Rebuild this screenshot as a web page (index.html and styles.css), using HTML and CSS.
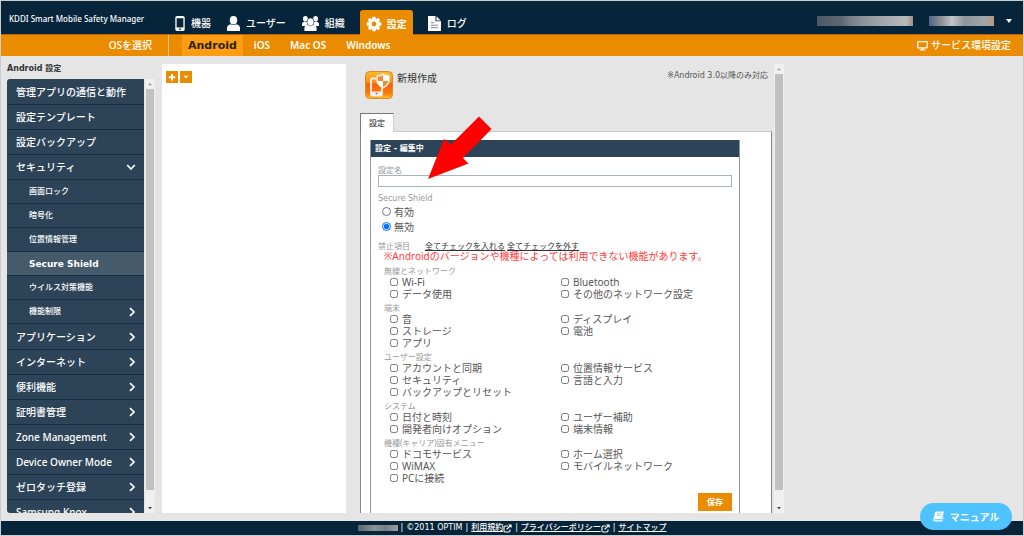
FILE: index.html
```html
<!DOCTYPE html>
<html lang="ja">
<head>
<meta charset="utf-8">
<title>KDDI Smart Mobile Safety Manager</title>
<link rel="stylesheet" href="styles.css">
</head>
<body>
<svg class="defs" aria-hidden="true">
  <symbol id="chev-r" viewBox="0 0 8 10"><path d="M2 1.2 6 5 2 8.8" fill="none" stroke="#fff" stroke-width="1.7"/></symbol>
  <symbol id="chev-d" viewBox="0 0 10 8"><path d="M1.2 2 5 6 8.8 2" fill="none" stroke="#fff" stroke-width="1.7"/></symbol>
  <symbol id="ext" viewBox="0 0 9 9"><path d="M5 2H2.2Q1 2 1 3.2V6.8Q1 8 2.2 8H5.8Q7 8 7 6.8V5.5" fill="none" stroke="#fff" stroke-width="1.1"/><path d="M3.6 5.4 7.4 1.6" stroke="#fff" stroke-width="1.3"/><path d="M5 .4H8.6V4z" fill="#fff"/></symbol>
</svg>
<div class="page">
  <header class="top">
    <div class="brand">KDDI Smart Mobile Safety Manager</div>
    <nav class="main-nav">
      <a href="#"><svg class="ico-phone" viewBox="0 0 10 16"><rect width="10" height="16" rx="1.8" fill="#fff"/><rect x="1.4" y="2.4" width="7.2" height="9.8" fill="#06253a"/><circle cx="5" cy="14" r="1" fill="#06253a"/></svg>機器</a>
      <a href="#"><svg class="ico-user" viewBox="0 0 13 15"><ellipse cx="6.5" cy="4.2" rx="3.7" ry="4.2" fill="#fff"/><path d="M0 15V12Q0 9 4 8.2Q6.5 10 9 8.2Q13 9 13 12V15z" fill="#fff"/></svg>ユーザー</a>
      <a href="#"><svg class="ico-group" viewBox="0 0 17 15"><g fill="#fff"><ellipse cx="3.4" cy="2.8" rx="2.4" ry="2.7"/><ellipse cx="13.6" cy="2.8" rx="2.4" ry="2.7"/><path d="M0 10V8Q0 6.2 2.4 5.6L5.5 6 5.5 10zM17 10V8Q17 6.2 14.600 5.600L11.500 6 11.500 10z"/></g><g fill="#fff"><path d="M2.400 15V12Q2.400 9.600 5.800 9H11.200Q14.600 9.600 14.600 12V15z"/><ellipse cx="8.500" cy="6" rx="3.400" ry="4" stroke="#06253a" stroke-width=".5"/></g></svg>組織</a>
      <a href="#" class="on"><svg class="ico-gear" viewBox="-8 -8 16 16"><g fill="#fff"><circle r="5.6"/><rect x="-1.7" y="-7.3" width="3.4" height="14.6" rx=".5"/><rect x="-1.7" y="-7.3" width="3.4" height="14.6" rx=".5" transform="rotate(45)"/><rect x="-1.7" y="-7.3" width="3.4" height="14.6" rx=".5" transform="rotate(90)"/><rect x="-1.7" y="-7.3" width="3.4" height="14.6" rx=".5" transform="rotate(135)"/></g><circle r="2.4" fill="#eb8c00"/></svg>設定</a>
      <a href="#"><svg class="ico-doc" viewBox="0 0 13 15"><path d="M0 0H7.5V5.3H13V15H0z" fill="#fff"/><path d="M8.5.3 12.7 4.4H8.5z" fill="#fff"/><path d="M3 6.7H6M3 9.2H10M3 11.7H10" stroke="#7d8a94" stroke-width="1"/></svg>ログ</a>
    </nav>
    <div class="account"><span class="mask mask-a"></span><span class="mask mask-b"></span><svg class="caret" viewBox="0 0 6 4"><path d="M0 0H6L3 4z" fill="#fff"/></svg></div>
  </header>
  <nav class="os-bar">
    <span class="os-label">OSを選択</span>
    <a href="#" class="on">Android</a><a href="#">iOS</a><a href="#">Mac OS</a><a href="#">Windows</a>
    <a href="#" class="env"><svg class="ico-screen" viewBox="0 0 11 10"><rect x=".7" y=".7" width="9.6" height="6.2" rx=".8" fill="none" stroke="#fff" stroke-width="1.3"/><path d="M4.5 7H6.5V8.4H8.3V9.6H2.7V8.4H4.5z" fill="#fff"/></svg>サービス環境設定</a>
  </nav>
  <main class="body">
    <aside class="side">
      <h2>Android 設定</h2>
      <div class="side-box">
        <ul class="menu">
          <li><a href="#">管理アプリの通信と動作</a></li>
          <li><a href="#">設定テンプレート</a></li>
          <li><a href="#">設定バックアップ</a></li>
          <li><a href="#">セキュリティ<svg class="down"><use href="#chev-d"/></svg></a>
            <ul class="sub">
              <li><a href="#">画面ロック</a></li>
              <li><a href="#">暗号化</a></li>
              <li><a href="#">位置情報管理</a></li>
              <li><a href="#" class="on">Secure Shield</a></li>
              <li><a href="#">ウイルス対策機能</a></li>
              <li><a href="#">機能制限<svg class="right"><use href="#chev-r"/></svg></a></li>
            </ul>
          </li>
          <li><a href="#">アプリケーション<svg class="right"><use href="#chev-r"/></svg></a></li>
          <li><a href="#">インターネット<svg class="right"><use href="#chev-r"/></svg></a></li>
          <li><a href="#">便利機能<svg class="right"><use href="#chev-r"/></svg></a></li>
          <li><a href="#">証明書管理<svg class="right"><use href="#chev-r"/></svg></a></li>
          <li><a href="#">Zone Management<svg class="right"><use href="#chev-r"/></svg></a></li>
          <li><a href="#">Device Owner Mode<svg class="right"><use href="#chev-r"/></svg></a></li>
          <li><a href="#">ゼロタッチ登録<svg class="right"><use href="#chev-r"/></svg></a></li>
          <li><a href="#">Samsung Knox<svg class="right"><use href="#chev-r"/></svg></a></li>
        </ul>
        <div class="bar"><svg viewBox="0 0 10 10"><path d="M3 6.2H7L5 4z" fill="#999"/></svg><i></i><svg viewBox="0 0 10 10"><path d="M3 4H7L5 6.2z" fill="#444"/></svg></div>
      </div>
    </aside>
    <section class="list">
      <button type="button" aria-label="追加"><svg viewBox="0 0 12 12"><path d="M6 3V9.4M2.8 6.2H9.2" stroke="#fff" stroke-width="2"/></svg></button>
      <button type="button" aria-label="メニュー"><svg viewBox="0 0 12 12"><path d="M3.5 4.8H8.5L6 7.6z" fill="#fff"/></svg></button>
    </section>
    <section class="work">
      <div class="content">
        <div class="title">
          <svg class="app-icon" viewBox="0 0 28 28">
            <defs><linearGradient id="og" x2="0" y2="1"><stop offset="0" stop-color="#fbbd2c"/><stop offset=".42" stop-color="#f78d14"/><stop offset=".46" stop-color="#f9600c"/><stop offset=".8" stop-color="#fb7a0a"/><stop offset="1" stop-color="#ffc22a"/></linearGradient></defs>
            <rect x=".5" y=".5" width="27" height="27" rx="4" fill="url(#og)" stroke="#dc8a25"/>
            <path d="M12 7.500H7.500Q6 7.500 6 9V23Q6 24.500 7.500 24.500H15.500Q17 24.500 17 23V17" fill="none" stroke="#eee" stroke-width="1.800"/>
            <path d="M6 20.500H17V24.500H6z" fill="#eee"/><circle cx="11.500" cy="22.500" r="1" fill="#b66"/>
            <path d="M18 2.500Q21 4.500 24.500 4.500V10Q24 14.500 18 17.500Q12 14.500 11.500 10V4.500Q15 4.500 18 2.500z" fill="#fff" stroke="#e9d3c3" stroke-width=".5"/>
            <path d="M18 10V4Q15.500 5.500 12.700 5.600V10zM18 10H23.200Q22.500 13.700 18 16z" fill="#f5892b"/>
          </svg>
          <h1>新規作成</h1>
          <p>※Android 3.0以降のみ対応</p>
        </div>
        <div class="tabs"><button type="button">設定</button></div>
        <div class="tab-panel">
          <form class="card">
            <h3>設定 - 編集中</h3>
            <div class="fields">
              <label class="cap" for="name">設定名</label>
              <input class="text" id="name" type="text">
              <fieldset class="radios">
                <legend class="cap">Secure Shield</legend>
                <label><input type="radio" name="ss">有効</label>
                <label><input type="radio" name="ss" checked>無効</label>
              </fieldset>
              <div class="ban"><span class="cap">禁止項目</span><a href="#">全てチェックを入れる</a> <a href="#">全てチェックを外す</a></div>
              <p class="warn">※Androidのバージョンや機種によっては利用できない機能があります。</p>
              <fieldset class="group"><legend>無線とネットワーク</legend><div class="opts">
                <label><input type="checkbox">Wi-Fi</label><label><input type="checkbox">Bluetooth</label>
                <label><input type="checkbox">データ使用</label><label><input type="checkbox">その他のネットワーク設定</label></div></fieldset>
              <fieldset class="group"><legend>端末</legend><div class="opts">
                <label><input type="checkbox">音</label><label><input type="checkbox">ディスプレイ</label>
                <label><input type="checkbox">ストレージ</label><label><input type="checkbox">電池</label>
                <label><input type="checkbox">アプリ</label></div></fieldset>
              <fieldset class="group"><legend>ユーザー設定</legend><div class="opts">
                <label><input type="checkbox">アカウントと同期</label><label><input type="checkbox">位置情報サービス</label>
                <label><input type="checkbox">セキュリティ</label><label><input type="checkbox">言語と入力</label>
                <label><input type="checkbox">バックアップとリセット</label></div></fieldset>
              <fieldset class="group"><legend>システム</legend><div class="opts">
                <label><input type="checkbox">日付と時刻</label><label><input type="checkbox">ユーザー補助</label>
                <label><input type="checkbox">開発者向けオプション</label><label><input type="checkbox">端末情報</label></div></fieldset>
              <fieldset class="group"><legend>機種(キャリア)固有メニュー</legend><div class="opts">
                <label><input type="checkbox">ドコモサービス</label><label><input type="checkbox">ホーム選択</label>
                <label><input type="checkbox">WiMAX</label><label><input type="checkbox">モバイルネットワーク</label>
                <label><input type="checkbox">PCに接続</label></div></fieldset>
              <button class="save" type="button">保存</button>
            </div>
          </form>
        </div>
        <svg class="pointer" viewBox="0 0 64 64" aria-hidden="true"><path d="M0 63 16 23 23 28.500 51 .5 63.500 13 35 42 40.500 47.500z" fill="#f00"/></svg>
      </div>
      <div class="bar"><svg viewBox="0 0 10 10"><path d="M3 6.200H7L5 4z" fill="#999"/></svg><i></i><svg viewBox="0 0 10 10"><path d="M3 4H7L5 6.200z" fill="#444"/></svg></div>
    </section>
  </main>
  <footer class="foot">
    <span class="mask mask-c"></span><span>|</span><span>©2011 OPTIM</span><span>|</span><a href="#">利用規約<svg><use href="#ext"/></svg></a><span>|</span><a href="#">プライバシーポリシー<svg><use href="#ext"/></svg></a><span>|</span><a href="#">サイトマップ</a>
  </footer>
  <button class="manual" type="button"><svg viewBox="0 0 11 11"><path d="M3.200.5H10Q10.900.5 10.700 1.400L9.200 7.500Q9 8.200 8.200 8.200H2.200Q1.200 8.300 1.500 9.300H8.500Q9.300 9.300 9.600 8.500L10.600 5V7L9.500 9.800Q9.200 10.500 8.400 10.500H1.600Q.2 10.300.4 8.500L2 1.500Q2.200.5 3.200.5z" fill="#fff"/><path d="M4.200 2.600H8.600M3.800 4.300H8.200" stroke="#4fc3ff" stroke-width=".7"/></svg>マニュアル</button>
</div>
</body>
</html>
```

FILE: styles.css
```css
* { box-sizing: border-box; }
body { margin: 0; font: 10px/12px "Noto Sans", "Noto Sans CJK JP", sans-serif; color: #555; }
h1, h2, h3, p, ul, fieldset { margin: 0; padding: 0; border: 0; font-weight: normal; }
ul { list-style: none; }
a { color: inherit; text-decoration: none; }
button { font: inherit; border: 0; padding: 0; cursor: pointer; }
svg { display: block; flex: none; }
.defs { display: none; }

.page { position: relative; height: 100vh; display: flex; flex-direction: column; border: 1px solid #ccc; background: #e5e5e5; overflow: hidden; }

.top { display: flex; height: 34px; flex: none; background: #06253a; border-bottom: 1px solid #b9620f; color: #fff; }
.brand { width: 160px; padding: 12px 0 0 8px; font-size: 8px; white-space: nowrap; font-weight: 500; }
.main-nav { display: flex; align-items: flex-end; font-weight: 500; }
.main-nav a { display: flex; align-items: center; gap: 6px; height: 24px; padding: 2px 8px 0; white-space: nowrap; }
.main-nav a.on { height: 25px; background: #eb8c00; border-radius: 3px 3px 0 0; padding: 2px 6px 0; margin: 0 7px -1px; font-weight: 700; gap: 5px; }
.ico-phone { width: 10px; height: 15px; margin-left: 6px; }
.ico-user { width: 13px; height: 15px; }
.ico-group { width: 17px; height: 15px; }
.ico-gear { width: 16px; height: 16px; }
.ico-doc { width: 13px; height: 15px; }
.account { margin-left: auto; display: flex; align-items: center; gap: 16px; padding: 6px 11px 0 0; }
.account .caret { width: 6px; height: 4px; margin-left: -4px; }
.mask { display: block; height: 10px; }
.mask-a { width: 96px; background: linear-gradient(90deg, #4d5a66, #5f6570 25%, #777d84 34%, #8f959b 50%, #a5a8ab 70%, #b7b9bb 93%, #a08f83); }
.mask-b { width: 65px; background: linear-gradient(90deg, #53628a, #8f9496 20%, #c2c4c6 35%, #8f959c 55%, #a3a6a9 85%, #b19b86); }
.mask-c { width: 40px; height: 6px; background: linear-gradient(90deg, #596773, #8b9299 40%, #777f87 70%, #9a9fa4); }

.os-bar { display: flex; align-items: center; height: 21px; flex: none; background: #eb8c00; color: #fff; font-weight: 600; }
.os-label { width: 168px; padding-right: 16px; text-align: right; line-height: 21px; border-right: 1px solid #f5c68c; margin-right: 13px; font-weight: 500; }
.os-bar a { padding: 0 10px; line-height: 21px; }
.os-bar a.on { background: #fe9c12; color: #2b2413; font: bold 11px/21px "DejaVu Sans", sans-serif; padding: 0 6px; margin-right: 1px; }
.os-bar .env { margin-left: auto; display: flex; align-items: center; gap: 3px; padding: 0 12px 0 0; font-weight: 500; }
.ico-screen { width: 11px; height: 10px; }

.body { flex: 1; min-height: 0; display: flex; padding-bottom: 8px; }
.side { width: 154px; flex: none; display: flex; flex-direction: column; padding: 7px 0 0 6px; }
.side h2 { font: bold 8px/12px "DejaVu Sans", "Noto Sans CJK JP", sans-serif; color: #333; padding-bottom: 4px; }
.side-box { flex: 1; min-height: 0; display: flex; }
.menu { flex: 1; overflow: hidden; border-radius: 3px 0 0 3px; background: #2d4458; color: #fff; font-weight: 500; margin-right: 1px; padding-top: 1px; }
.menu a { display: flex; align-items: center; justify-content: space-between; height: 25px; padding: 0 8px 0 9px; border-bottom: 1px solid #172f45; white-space: nowrap; }
.sub { border-bottom: 1px solid #2d4458; }
.sub a { height: 24px; padding-left: 22px; font: 500 8px/12px "DejaVu Sans", "Noto Sans CJK JP", sans-serif; }
.sub a.on { background: #455a6a; font-size: 9px; font-weight: 700; }
.down { width: 10px; height: 8px; }
.right { width: 8px; height: 10px; }

.bar { width: 10px; flex: none; display: flex; flex-direction: column; align-items: center; background: #f0f0f0; }
.bar svg { width: 10px; height: 10px; }
.bar i { width: 8px; flex: 1; background: #c1c1c1; margin-bottom: 13px; }

.list { width: 18%; margin: 8px 0 0 7px; padding: 7px 4px; background: #fff; display: flex; gap: 2px; }
.list button { width: 12px; height: 12px; background: #eb8c00; }
.list svg { width: 12px; height: 12px; }

.work { width: 41.500%; margin: 8px 0 0 14px; display: flex; min-height: 0; }
.content { position: relative; flex: 1; min-width: 0; overflow: hidden; display: flex; flex-direction: column; margin-right: 2px; }
.title { display: flex; padding: 7px 4px 0 5px; height: 49px; flex: none; }
.title h1 { font-size: 10px; line-height: 14px; margin-left: 4px; color: #333; }
.title p { margin-left: auto; font: 8px/10px "DejaVu Sans", "Noto Sans CJK JP", sans-serif; }
.app-icon { width: 28px; height: 28px; }
.tabs { flex: none; display: flex; }
.tabs button { position: relative; z-index: 1; width: 34px; height: 19px; margin-bottom: -1px; background: #fff; border: 1px solid #6f7b86; border-right-color: #ccc; border-bottom: 0; font: 8px/12px "Noto Sans CJK JP", sans-serif; color: #222; }
.tab-panel { flex: 1; min-height: 0; background: #fff; border: solid #7c8791; border-width: 1px 1px 0; border-top-color: #c8c8c8; padding: 8px 31px 0 9px; }
.card { border: solid #8d969e; border-width: 0 1px; height: 100%; }
.card h3 { background: #2d4458; color: #fff; font: bold 8px/17px "DejaVu Sans", "Noto Sans CJK JP", sans-serif; padding: 0 4px; }
.fields { padding: 7px 7px 0; display: flex; flex-direction: column; }
.cap, legend { font-size: 8px; line-height: 11px; color: #999; padding: 0; }
.text { height: 12px; width: 100%; border: 1px solid #a5b3c4; background: #fff; padding: 0 2px; font: 8px/10px "Noto Sans", "Noto Sans CJK JP", sans-serif; }
.radios { padding-top: 6px; }
.radios legend { float: left; width: 100%; font-family: "DejaVu Sans", sans-serif; }
.radios label { display: flex; align-items: center; height: 15px; clear: both; padding-left: 4px; }
.radios input { width: 9px; height: 9px; margin: 0 3px 0 0; }
.ban { padding-top: 6px; font-size: 8px; line-height: 11px; color: #333; }
.ban .cap { display: inline-block; width: 47px; }
.ban a { text-decoration: underline; }
.warn { color: #ff3b3b; padding-left: 6px; line-height: 11px; margin-bottom: 3px; white-space: nowrap; }
.group { padding: 0 0 2px 6px; }
.group legend { display: block; }
.opts { display: grid; grid-template-columns: 50% 50%; padding-left: 6px; }
.opts label { display: flex; align-items: center; height: 12px; white-space: nowrap; }
.opts input { width: 8px; height: 8px; margin: 0 4px 0 0; }
.save { align-self: flex-end; width: 34px; height: 18px; margin-top: 7px; background: #eb8c00; color: #fff; font-size: 8px; font-weight: 700; }
.pointer { position: absolute; left: 68px; top: 52px; width: 64px; height: 64px; z-index: 2; }

.foot { flex: none; height: 14px; background: #06253a; color: #fff; display: flex; justify-content: center; align-items: center; gap: 3px; font: 500 8px/12px "DejaVu Sans", "Noto Sans CJK JP", sans-serif; }
.foot a { display: flex; align-items: center; text-decoration: underline; }
.foot svg { width: 9px; height: 9px; }
.manual { position: absolute; right: 11px; bottom: 5px; width: 92px; height: 27px; border-radius: 14px; background: #4fc3ff; color: #fff; font-weight: 700; display: flex; align-items: center; justify-content: center; gap: 6px; }
.manual svg { width: 11px; height: 11px; }
```
